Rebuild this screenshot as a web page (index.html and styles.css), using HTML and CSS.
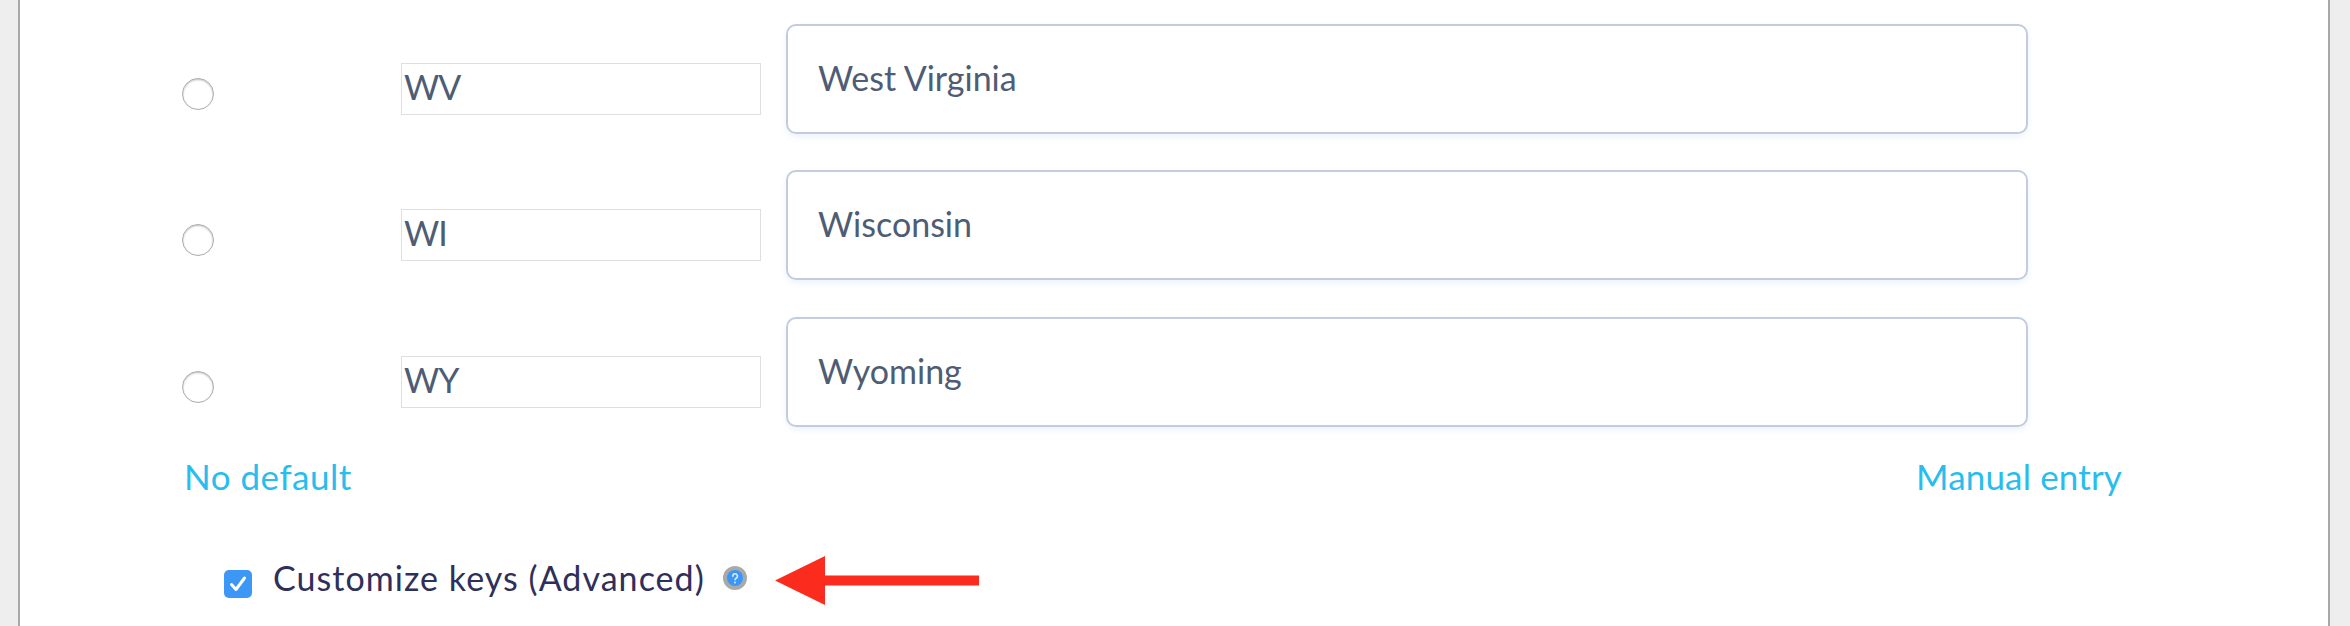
FILE: index.html
```html
<!DOCTYPE html>
<html lang="en">
<head>
<meta charset="utf-8">
<title>Customize keys</title>
<link rel="stylesheet" href="styles.css">
</head>
<body>
<main class="panel">
  <div class="rows">
    <div class="row">
      <span class="radio"></span>
      <div class="key">WV</div>
      <div class="label">West Virginia</div>
    </div>
    <div class="row">
      <span class="radio"></span>
      <div class="key">WI</div>
      <div class="label">Wisconsin</div>
    </div>
    <div class="row">
      <span class="radio"></span>
      <div class="key">WY</div>
      <div class="label">Wyoming</div>
    </div>
  </div>
  <div class="links">
    <a class="link">No default</a>
    <a class="link link-right">Manual entry</a>
  </div>
  <div class="advanced">
    <span class="check">
      <svg viewBox="0 0 28 28" width="28" height="28"><path d="M7.500 14.500l4.500 5L20.500 8" fill="none" stroke="#fff" stroke-width="3" stroke-linecap="round" stroke-linejoin="round"/></svg>
    </span>
    <span class="adv-text">Customize keys (Advanced)</span>
    <span class="help">
      <svg viewBox="0 0 24 24" width="24" height="24"><circle cx="12" cy="12" r="12" fill="#a9a9a9"/><circle cx="12" cy="12" r="8" fill="#3b97f6"/><path d="M9.800 10.200a2.300 2.300 0 1 1 3.300 2c-.8.400-1.100.8-1.100 1.600" fill="none" stroke="#d5e8ff" stroke-width="1.600" stroke-linecap="round"/><circle cx="12" cy="16.500" r="1" fill="#d5e8ff"/></svg>
    </span>
    <svg class="arrow" viewBox="0 0 204 49" width="204" height="49"><path d="M0 24.500L50 0V19.500H204V29.500H50V49Z" fill="#fb2c1e"/></svg>
  </div>
</main>
</body>
</html>
```
FILE: styles.css
```css
html, body {
  margin: 0;
  height: 626px;
  overflow: hidden;
  background: #eeeeee;
}
.panel {
  box-sizing: border-box;
  margin: 0 20px 0 18px;
  height: 626px;
  background: #fff;
  border-left: 2px solid #a8a8a8;
  border-right: 2px solid #a8a8a8;
  padding: 24px 0 0 0;
  font-family: Lato, "Noto Sans", sans-serif;
}
.rows {
  display: flex;
  flex-direction: column;
  gap: 36.250px;
}
.row {
  display: flex;
  align-items: flex-start;
  height: 110px;
}
.radio {
  box-sizing: border-box;
  flex: none;
  width: 32px;
  height: 32px;
  margin: 54px 0 0 162px;
  border: 1.500px solid #acacac;
  border-radius: 50%;
  background: #fff;
  box-shadow: inset 0 1px 2px rgba(0, 0, 0, 0.25);
}
.key {
  box-sizing: border-box;
  flex: none;
  width: 360px;
  height: 52px;
  margin: 39px 0 0 187px;
  padding-left: 2px;
  border: 1.500px solid #dfdfe1;
  font-size: 34px;
  line-height: 46px;
  letter-spacing: -1px;
  color: #4e5c74;
}
.label {
  box-sizing: border-box;
  flex: none;
  width: 1242px;
  height: 110px;
  margin-left: 25px;
  padding: 0 0 0 30px;
  border: 2px solid #c3ccdc;
  border-radius: 10px;
  box-shadow: 0 3px 6px rgba(150, 190, 235, 0.18);
  font-size: 34px;
  line-height: 103px;
  color: #4e5c74;
}
.links {
  display: flex;
  justify-content: space-between;
  margin: 24.500px 206px 0 164px;
}
.link {
  font-size: 35px;
  line-height: 50px;
  letter-spacing: 0.500px;
  color: #29bdee;
}
.link-right {
  letter-spacing: 0.150px;
}
.advanced {
  display: flex;
  align-items: flex-start;
  margin: 55px 0 0 204px;
}
.check {
  flex: none;
  width: 28px;
  height: 28px;
  margin-top: 14px;
  border-radius: 5px;
  background: #3d97f6;
}
.check svg, .help svg, .arrow {
  display: block;
}
.adv-text {
  margin-left: 21px;
  font-size: 34px;
  line-height: 44px;
  letter-spacing: 1.050px;
  color: #2e2f5b;
}
.help {
  flex: none;
  width: 24px;
  height: 24px;
  margin: 10px 0 0 18px;
}
.arrow {
  flex: none;
  margin: 0 0 0 28px;
}
```
